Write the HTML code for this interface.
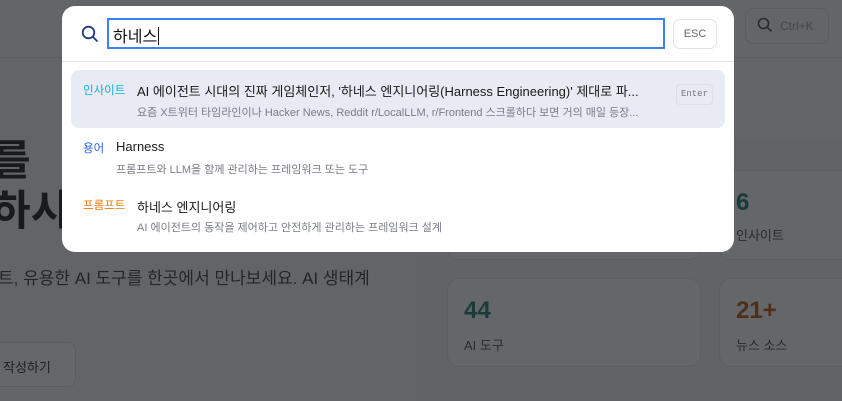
<!DOCTYPE html>
<html><head><meta charset="utf-8"><style>
*{box-sizing:border-box;margin:0;padding:0}
html,body{width:842px;height:401px;overflow:hidden}
body{position:relative;background:#f4f5f7;font-family:"Liberation Sans","Noto Sans CJK KR",sans-serif}
.hdr{position:absolute;left:0;top:0;width:842px;height:58px;background:#f7f7f8;border-bottom:1px solid #e3e4e8}
.sbtn{position:absolute;left:745px;top:8px;width:84px;height:36px;border:1px solid #d9dbe0;border-radius:8px;font-size:12px;color:#9a9ca3;padding:10px 0 0 34px}
.panel{position:absolute;left:415px;top:140px;width:440px;height:270px;background:#eef1f4;border-radius:14px}
.card{position:absolute;background:#fbfbfc;border:1px solid #e0e2e6;border-radius:12px}
.num{position:absolute;left:16px;top:18px;font-size:24px;font-weight:bold}
.lbl{position:absolute;left:16px;top:56px;font-size:13px;color:#444}
.h{position:absolute;left:-8px;top:136px;font-size:42px;line-height:50px;font-weight:bold;color:#111}
.sub{position:absolute;left:-2px;top:264px;font-size:17px;color:#333}
.wbtn{position:absolute;left:-20px;top:342px;width:96px;height:45px;border:1px solid #ddd;border-radius:8px;background:#fff;font-size:13px;color:#222;padding:14px 0 0 22px}
.ov{position:absolute;left:0;top:0;width:842px;height:401px;background:rgba(30,31,35,0.68)}
.modal{position:absolute;left:62px;top:6px;width:672px;height:246px;background:#fff;border-radius:13px}
.inp{position:absolute;left:45px;top:12px;width:558px;height:31px;border:2px solid #3b82f6;font-size:16px;color:#111;padding:3px 0 0 4px}
.esc{position:absolute;left:611px;top:13px;width:44px;height:30px;border:1px solid #dfe2ea;border-radius:7px;font-size:11px;color:#666;text-align:center;line-height:28px}
.div{position:absolute;left:0;top:55px;width:672px;height:1px;background:#e3e5ec}
.sel{position:absolute;left:9px;top:64px;width:654px;height:58px;background:#e8eaf4;border-radius:8px}
.tag{position:absolute;font-size:11.5px}
.t{position:absolute;font-size:13px;color:#1a1a1a}
.d{position:absolute;font-size:11px;color:#7a7d86}
.ent{position:absolute;left:614px;top:78px;width:37px;height:21px;border:1px solid #dcdfe8;border-radius:4px;font-family:"Liberation Mono",monospace;font-size:9px;color:#777;text-align:center;line-height:19px}
.caret{display:inline-block;width:1px;height:18px;background:#111;vertical-align:-3px;margin-left:1px}
</style></head><body>
<div class="hdr"><div class="sbtn">Ctrl+K</div>
<svg style="position:absolute;left:757px;top:17px" width="16" height="16" viewBox="0 0 16 16"><circle cx="6.5" cy="6.5" r="5" fill="none" stroke="#444" stroke-width="1.6"/><path d="M10.2 10.2L14.5 14.5" stroke="#444" stroke-width="1.6"/></svg></div>
<div class="h">를<br>하시</div>
<div class="sub">트, 유용한 AI 도구를 한곳에서 만나보세요. AI 생태계</div>
<div class="wbtn">작성하기</div>
<div class="panel"></div>
<div class="card" style="left:447px;top:170px;width:254px;height:90px"></div>
<div class="card" style="left:719px;top:170px;width:140px;height:90px"><div class="num" style="color:#0f766e">6</div><div class="lbl" style="top:54px">인사이트</div></div>
<div class="card" style="left:447px;top:278px;width:254px;height:89px"><div class="num" style="color:#0f766e">44</div><div class="lbl">AI 도구</div></div>
<div class="card" style="left:719px;top:278px;width:140px;height:89px"><div class="num" style="color:#b45309">21+</div><div class="lbl">뉴스 소스</div></div>
<div class="ov"></div>
<div class="modal">
<svg style="position:absolute;left:19px;top:19px" width="18" height="18" viewBox="0 0 18 18"><circle cx="7.5" cy="7.5" r="5.8" fill="none" stroke="#1e3a8a" stroke-width="1.8"/><path d="M11.8 11.8L16.5 16.5" stroke="#1e3a8a" stroke-width="1.8"/></svg>
<div class="inp">하네스<span class="caret"></span></div>
<div class="esc">ESC</div>
<div class="div"></div>
<div class="sel"></div>
<div class="tag" style="left:21px;top:76px;color:#06b6d4">인사이트</div>
<div class="t" style="left:75px;top:75px">AI 에이전트 시대의 진짜 게임체인저, '하네스 엔지니어링(Harness Engineering)' 제대로 파...</div>
<div class="d" style="left:75px;top:98px">요즘 X트위터 타임라인이나 Hacker News, Reddit r/LocalLLM, r/Frontend 스크롤하다 보면 거의 매일 등장...</div>
<div class="ent">Enter</div>
<div class="tag" style="left:21px;top:134px;color:#2563eb">용어</div>
<div class="t" style="left:54px;top:133px">Harness</div>
<div class="d" style="left:54px;top:155px">프롬프트와 LLM을 함께 관리하는 프레임워크 또는 도구</div>
<div class="tag" style="left:21px;top:191px;color:#ea7a0c">프롬프트</div>
<div class="t" style="left:75px;top:191px">하네스 엔지니어링</div>
<div class="d" style="left:75px;top:213px">AI 에이전트의 동작을 제어하고 안전하게 관리하는 프레임워크 설계</div>
</div>
</body></html>
